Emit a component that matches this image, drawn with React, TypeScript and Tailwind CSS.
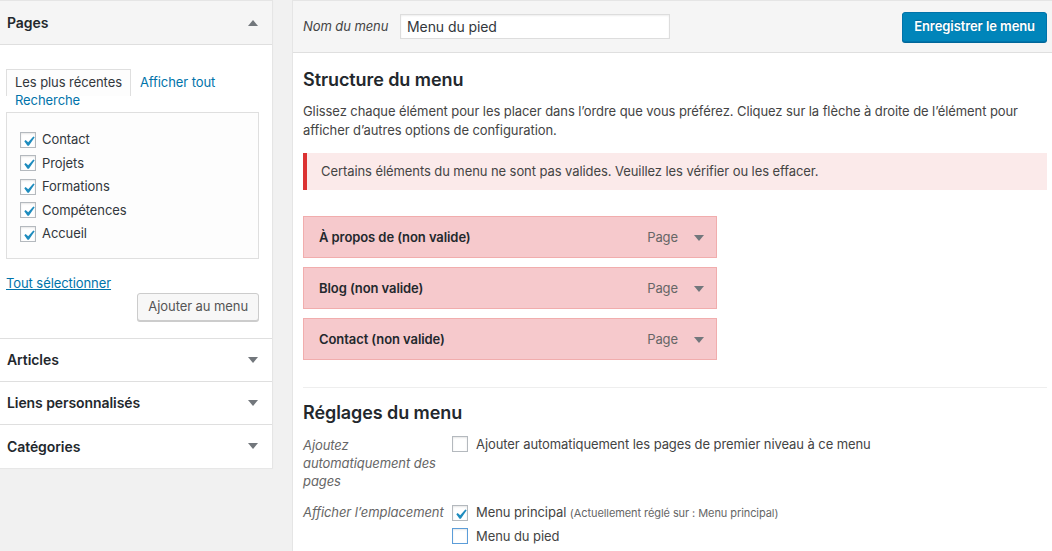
import React from "react";

function Check() {
  return (
    <svg viewBox="2.5 1.5 16 16" className="w-[16px] h-[16px] block">
      <path d="M14.83 4.89l1.34.94-5.81 8.38H9.02L5.78 9.67l1.34-1.25 2.57 2.4z" fill="#1e8cbe" />
    </svg>
  );
}

function Checkbox({ checked, focus }: { checked?: boolean; focus?: boolean }) {
  return (
    <span
      className={
        "w-[16px] h-[16px] shrink-0 bg-white border shadow-[inset_0_1px_2px_rgba(0,0,0,0.1)] " +
        (focus ? "border-[#5b9dd9]" : "border-[#b4b9be]")
      }
    >
      {checked ? <Check /> : null}
    </span>
  );
}

function TriDown({ up }: { up?: boolean }) {
  return (
    <svg width="10" height="6" viewBox="0 0 10 6" className="block">
      {up ? <polygon points="0,6 10,6 5,0" fill="#72777c" /> : <polygon points="0,0 10,0 5,6" fill="#72777c" />}
    </svg>
  );
}

function Section({ title }: { title: string }) {
  return (
    <div className="h-[43px] border-b border-[#dfdfdf] flex items-center justify-between pl-[7px] pr-[14px]">
      <span className="text-[14px] font-semibold text-[#23282d]">{title}</span>
      <TriDown />
    </div>
  );
}

function MenuItem({ title }: { title: string }) {
  return (
    <div className="w-[414px] h-[42px] bg-[#f6c9cc] border border-[#f1adad] flex items-center justify-between pl-[15px] pr-[12px] pt-[1px]">
      <span className="text-[13px] font-semibold text-[#23282d]">{title}</span>
      <div className="flex items-center gap-[16px]">
        <span className="text-[13px] text-[#666]">Page</span>
        <TriDown />
      </div>
    </div>
  );
}

export default function App() {
  const pages = ["Contact", "Projets", "Formations", "Compétences", "Accueil"];
  return (
    <div className="w-[1052px] h-[551px] overflow-hidden bg-[#f1f1f1] flex items-start font-['Inter',Arial,sans-serif] text-[13px] tracking-[-0.08px] text-[#32373c]">
      {/* Left column */}
      <div className="w-[273px] shrink-0 bg-white border-r border-t border-[#e5e5e5] shadow-[0_1px_1px_rgba(0,0,0,0.04)]">
        <div className="h-[44px] bg-[#f5f5f5] border-b border-[#dfdfdf] flex items-center justify-between pl-[7px] pr-[14px]">
          <span className="text-[14px] font-semibold text-[#23282d]">Pages</span>
          <TriDown up />
        </div>
        <div className="pl-[6px] pr-[13px] pt-[28px] pb-[17px] border-b border-[#dfdfdf]">
          <div className="leading-[18px]">
            <span className="border border-b-0 border-[#dfdfdf] bg-[#fdfdfd] px-[8px] pt-[4px] pb-[6px] text-[#32373c]">Les plus récentes</span>
            <span className="border border-transparent px-[8px] text-[#0073aa]">Afficher tout</span>
            <br />
            <span className="border border-transparent px-[8px] text-[#0073aa]">Recherche</span>
          </div>
          <div className="mt-[3px] border border-[#dfdfdf] bg-[#fdfdfd] pl-[13px] pt-[15px] pb-[12px]">
            {pages.map((p) => (
              <div key={p} className="h-[23.5px] flex items-center gap-[6px]">
                <Checkbox checked />
                <span>{p}</span>
              </div>
            ))}
          </div>
          <div className="mt-[15px] leading-[18px]">
            <span className="text-[#0073aa] underline">Tout sélectionner</span>
          </div>
          <div className="flex justify-end mt-[1px]">
            <button className="h-[28px] px-[10px] bg-[#f7f7f7] border border-[#cccccc] rounded-[3px] shadow-[0_1px_0_#cccccc] text-[13px] text-[#555]">
              Ajouter au menu
            </button>
          </div>
        </div>
        <Section title="Articles" />
        <Section title="Liens personnalisés" />
        <div className="h-[43px] flex items-center justify-between pl-[7px] pr-[14px]">
          <span className="text-[14px] font-semibold text-[#23282d]">Catégories</span>
          <TriDown />
        </div>
      </div>

      {/* Main */}
      <div className="ml-[19px] w-[765px] shrink-0 min-h-[551px] bg-white border-l border-t border-[#e5e5e5]">
        <div className="h-[52px] bg-[#f5f5f5] border-b border-[#dfdfdf] flex items-center pl-[10px] pr-[10px]">
          <span className="italic text-[#444] w-[97px]">Nom du menu</span>
          <div className="w-[270px] h-[25px] bg-white border border-[#dddddd] shadow-[inset_0_1px_2px_rgba(0,0,0,0.07)] flex items-center pl-[6px] text-[14px] text-[#32373c]">
            Menu du pied
          </div>
          <div className="flex-1" />
          <button className="h-[30px] px-[11px] bg-[#0085ba] border border-[#0073aa] rounded-[3px] shadow-[0_1px_0_#006799] text-white text-[13px] font-semibold [text-shadow:0_-1px_1px_#006799]">
            Enregistrer le menu
          </button>
        </div>
        <div className="pl-[10px] pr-[10px]">
          <h2 className="mt-[16px] text-[18px] font-semibold text-[#23282d] leading-[22px]">Structure du menu</h2>
          <p className="mt-[11px] leading-[19px] text-[#444]">
            Glissez chaque élément pour les placer dans l’ordre que vous préférez. Cliquez sur la flèche à droite de l’élément pour
            <br />
            afficher d’autres options de configuration.
          </p>
          <div className="mt-[13px] h-[37px] bg-[#fbeaea] border-l-[4px] border-[#dc3232] flex items-center pl-[14px] text-[#444]">
            Certains éléments du menu ne sont pas valides. Veuillez les vérifier ou les effacer.
          </div>
          <div className="mt-[26px] flex flex-col gap-[9px]">
            <MenuItem title="À propos de (non valide)" />
            <MenuItem title="Blog (non valide)" />
            <MenuItem title="Contact (non valide)" />
          </div>
          <div className="mt-[27px] border-t border-[#eeeeee]">
            <h3 className="mt-[14px] text-[18px] font-semibold text-[#23282d] leading-[22px]">Réglages du menu</h3>
            <div className="mt-[12px] flex">
              <div className="w-[149px] italic text-[#666] leading-[18px]">
                Ajoutez
                <br />
                automatiquement des
                <br />
                pages
              </div>
              <div className="flex items-start gap-[8px]">
                <Checkbox />
                <span className="leading-[16px] text-[#444]">Ajouter automatiquement les pages de premier niveau à ce menu</span>
              </div>
            </div>
            <div className="mt-[13px] flex">
              <div className="w-[149px] italic text-[#666] leading-[18px] whitespace-nowrap">Afficher l’emplacement</div>
              <div className="flex flex-col gap-[7px] pt-[1px]">
                <div className="flex items-center gap-[8px]">
                  <Checkbox checked />
                  <span className="leading-[16px] text-[#444]">
                    Menu principal <span className="text-[11px] text-[#666]">(Actuellement réglé sur : Menu principal)</span>
                  </span>
                </div>
                <div className="flex items-center gap-[8px]">
                  <Checkbox focus />
                  <span className="leading-[16px] text-[#444]">Menu du pied</span>
                </div>
              </div>
            </div>
          </div>
        </div>
      </div>
    </div>
  );
}
